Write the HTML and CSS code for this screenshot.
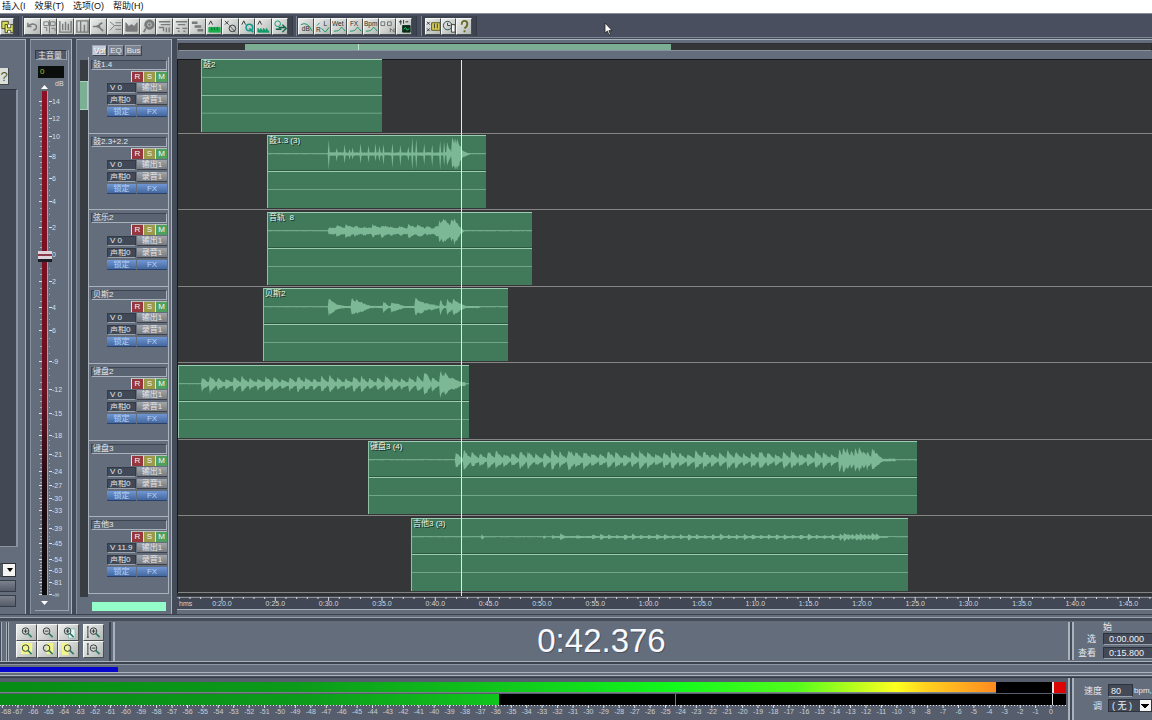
FILE: index.html
```html
<!DOCTYPE html>
<html lang="zh-CN">
<head>
<meta charset="utf-8">
<title>多轨编辑</title>
<link rel="stylesheet" href="styles.css">
</head>
<body>
<div class="app">
  <nav class="menu">
    <a href="#insert">插入(I</a><a href="#effects">效果(T)</a><a href="#options">选项(O)</a><a href="#help">帮助(H)</a>
  </nav>
  <header class="toolbar">
    <div class="tools" data-tools="file"></div>
    <div class="tools" data-tools="edit"></div>
    <div class="tools" data-tools="envelope"></div>
    <div class="tools" data-tools="window"></div>
    <svg class="pointer" width="10" height="14" viewBox="0 0 10 14"><path d="M1 1v10l2.400-2 1.600 4 1.500-.6-1.600-3.800H8z" fill="#fff" stroke="#222" stroke-width=".8"/></svg>
  </header>

  <main class="main">
    <section class="rack">
      <button class="rack-help" aria-label="帮助">?</button>
      <div class="rack-list"></div>
      <button class="rack-drop" aria-label="展开"><svg width="8" height="8" viewBox="0 0 8 8"><path d="M1 2h6L4 6z"/></svg></button>
      <button class="rack-bar" aria-label="效果"></button>
      <button class="rack-bar" aria-label="刷新"></button>
    </section>

    <section class="master">
      <div class="master-box">
        <h2 class="master-title">主音量</h2>
        <output class="lcd">0</output>
        <div class="fader">
          <svg class="scale" width="34" height="530" viewBox="0 0 34 530" id="scale"></svg>
          <input class="fader-input" type="range" min="0" max="1000" value="676" aria-label="主音量">
        </div>
      </div>
    </section>

    <section class="mixer">
      <div class="tabs"><button class="tab tab-on">Vol</button><button class="tab">EQ</button><button class="tab">Bus</button></div>
      <div class="mixer-body">
        <div class="scroller"><div class="scroller-thumb"></div></div>
        <div class="tracks" id="tracks"></div>
      </div>
      <div class="mixer-foot"><div class="load"></div></div>
    </section>

    <section class="view">
      <div class="overview"><div class="overview-bar"><div class="overview-range"></div></div></div>
      <div class="lanes" id="lanes"></div>
      <svg class="ruler" id="ruler" viewBox="0 0 975 17" preserveAspectRatio="xMinYMin slice"></svg>
    </section>
  </main>

  <section class="transport">
    <div class="zoom">
      <div class="zoom-grid" data-tools="zoom"></div>
      <div class="zoom-grid zoom-v" data-tools="zoomv"></div>
    </div>
    <output class="clock">0:42.376</output>
    <div class="times">
      <span class="times-head">始</span>
      <label for="sel">选</label><input class="field" id="sel" value="0:00.000">
      <label for="vis">查看</label><input class="field" id="vis" value="0:15.800">
    </div>
  </section>

  <div class="progress"><div class="progress-fill"></div></div>

  <footer class="bottom">
    <div class="meters">
      <div class="meter"><div class="meter-fill meter-top"></div><div class="clip-light"></div></div>
      <div class="meter"><div class="meter-fill meter-low"></div><div class="peak"></div><div class="zero"></div></div>
      <svg class="db" id="db" viewBox="0 0 1066 15" preserveAspectRatio="none"></svg>
    </div>
    <div class="tempo">
      <label for="bpm">速度</label><span class="tempo-row"><input class="field bpm" id="bpm" value="80">bpm,</span>
      <label for="key">调</label><select class="key" id="key"><option>( 无 )</option></select>
    </div>
  </footer>
</div>
<script src="app.js"></script>
</body>
</html>
```

FILE: styles.css
```css
:root {
  --panel: #646d7c;
  --gap: #434a58;
  --light: #a9b1bd;
  --dark: #333a45;
  --clip: #407a5b;
  --font: "Liberation Sans", "Noto Sans CJK SC", sans-serif;
}
* { box-sizing: border-box; }
body { margin: 0; background: var(--gap); font: 8px/10px var(--font); color: #e4e8ee; }
button, input, select { font: inherit; color: inherit; padding: 0; border: 0; margin: 0; border-radius: 0; }
svg { display: block; }
.app { display: flex; flex-direction: column; height: 100vh; min-height: 640px; overflow: hidden; }

.menu { display: flex; gap: 9px; height: 13px; padding-left: 2px; background: #fff; font-size: 9px; line-height: 13px; }
.menu a { color: #111; text-decoration: none; white-space: nowrap; }

.toolbar { position: relative; display: flex; gap: 6px; height: 25px; padding: 2px 0 1px; background: #494f5e; border-top: 1px solid #888d96; border-bottom: 1px solid #7c8593; }
.tools { display: flex; padding: 2px 4px 1px 1px; border-right: 1px solid #343a46; border-left: 1px solid #7d8594; background: #3d434f; }
.tools[data-tools="file"] { width: 19px; border-left: 0; padding-left: 0; margin-right: -3px; }
.tools[data-tools="edit"] { width: 271px; }
.tools[data-tools="envelope"] { width: 121px; margin-left: -3px; }
.tools[data-tools="window"] { width: 56px; padding-left: 3px; margin-left: -2px; }
.tool { flex: 1; min-width: 0; overflow: hidden; display: grid; place-items: center; color: #777b7b; background: linear-gradient(135deg, #eceeec, #b2b7b4); border: 1px solid; border-color: #f4f6f5 #4a4f52 #4a4f52 #f4f6f5; }
.tool svg { width: 15px; height: 15px; }
.tools[data-tools="file"] .tool svg { width: 13px; height: 14px; }
.pointer { position: absolute; left: 604px; top: 8px; }

.main { flex: 1; min-height: 0; display: flex; gap: 4px; padding-top: 1px; }
.rack, .master, .mixer { background: var(--panel); border-top: 1px solid var(--light); border-right: 1px solid var(--light); }
.master, .mixer { border-left: 1px solid #8790a0; }
.rack { width: 26px; display: flex; flex-direction: column; align-items: flex-start; gap: 3px; padding: 28px 2px 7px 0; }
.rack-help { width: 9px; height: 17px; font-size: 13px; line-height: 15px; color: #555a28; background: #dcdfd8; border: solid #41464a; border-width: 0 1px 1px 0; overflow: hidden; }
.rack-list { flex: 1; width: 18px; margin: 1px 0 13px; background: #434855; border-top: 1px solid #2f3540; border-right: 2px solid #8c94a2; border-bottom: 1px solid #8c94a2; }
.rack-drop { width: 16px; height: 14px; display: flex; justify-content: flex-end; align-items: center; background: #f4f4f2; border: 1px solid #2e3238; border-left: 3px solid #50565e; padding-right: 1px; color: #000; }
.rack-bar { width: 16px; height: 12px; background: linear-gradient(#7b828d, #555c69); border: 1px solid #353b47; border-left: 0; }

.master { width: 42px; padding: 10px 2px 3px 4px; }
.master-box { height: 100%; border-right: 1px solid #98a1ae; border-bottom: 1px solid #98a1ae; }
.master-title { margin: 0 1px 0 0; height: 10px; padding-left: 2px; font-weight: normal; font-size: 8px; line-height: 9px; background: #525a69; border: 1px solid #98a1ae; border-top-color: var(--dark); border-left-color: var(--dark); }
.lcd { display: block; width: 26px; height: 12px; margin: 6px 0 0 3px; padding-left: 2px; line-height: 12px; background: #0a0e0c; color: #a4c53a; }
.fader { display: grid; width: 34px; }
.fader > * { grid-area: 1 / 1; }
.scale text { fill: #d8dde5; font-size: 7px; }
.fader-input { -webkit-appearance: none; appearance: none; writing-mode: vertical-lr; direction: rtl; width: 14px; height: 504px; margin: 13px 0 0 3px; background: linear-gradient(#8e1024, #6a1020 60%, #230c13 78%, #0b0b0d) 4px 0 / 5px 100% no-repeat; }
.fader-input::-webkit-slider-thumb { -webkit-appearance: none; width: 14px; height: 11px; background: linear-gradient(#ded4da 0 3px, #8d3a4c 3px 5px, #ded4da 5px 8px, #1b1d25 8px); }

.mixer { width: 96px; display: flex; flex-direction: column; }
.tabs { display: flex; gap: 1px; height: 17px; padding: 5px 0 1px 15px; }
.tab { height: 11px; padding: 0 1px; line-height: 9px; background: #7d8490; border: 1px solid #9fa6b1; border-right-color: #3d4450; border-bottom-color: #3d4450; }
.tab-on { background: #c3ccdc; color: #fff; text-shadow: 1px 1px #6b7280; }
.mixer-body { flex: 1; min-height: 0; display: flex; }
.scroller { width: 8px; margin: 3px 0 -3px 3px; padding-top: 21px; background: #373d42; }
.scroller-thumb { height: 29px; background: #7bb094; border: 1px solid #a6d4ba; border-left: 0; }
.tracks { flex: 1; display: grid; grid-template-rows: repeat(7, 1fr); margin-right: 2px; border-left: 1px solid var(--light); border-right: 1px solid var(--light); }
.track { border-bottom: 1px solid var(--light); padding: 3px 1px 0 2px; min-height: 0; }
.name { height: 10px; margin: 0 0 1px; padding-left: 1px; font-size: 8px; line-height: 8px; font-weight: normal; border: 1px solid var(--light); border-top-color: #3e4552; border-left-color: #3e4552; background: #5a6372; }
.rsm { display: grid; grid-template-columns: repeat(3, 12px); justify-content: end; height: 11px; margin-bottom: 1px; }
.rsm button { line-height: 10px; border-left: 1px solid #dfe3e0; border-top: 1px solid #b9beb9; color: #f3f6f3; }
.rec { background: #96363d; }
.solo { background: #9a9a48; }
.mute { background: #4fa05e; }
.knobs { display: grid; grid-template-columns: 29px 30px; grid-auto-rows: 10px; gap: 2px 1px; justify-content: end; }
.knobs button { line-height: 9px; overflow: hidden; white-space: nowrap; }
.knobs .value { background: #414856; text-align: left; padding-left: 2px; border: 1px solid #343a46; border-bottom-color: #9aa2ae; line-height: 8px; }
.knobs .route { background: linear-gradient(#a2a5a9, #777a7e); border-bottom: 1px solid #3d424c; }
.knobs .blue { background: linear-gradient(#6f97d4, #44689f); border-bottom: 1px solid #2b4168; color: #b9d2f4; }
.mixer-foot { height: 20px; padding: 8px 5px 3px 15px; }
.load { height: 9px; background: #93fcc9; }

.view { flex: 1; min-width: 0; margin-left: 1px; display: flex; flex-direction: column; background: var(--panel); border-top: 1px solid var(--light); }
.overview { height: 19px; padding: 3px 0 8px 1px; }
.overview-bar { height: 8px; background: #333537; border: 1px solid #2b2f35; border-bottom-color: #8a929e; }
.overview-range { width: 43.8%; height: 100%; margin-left: 6.8%; background: linear-gradient(90deg, #7cae94 0 113px, #c2e6d1 113px 114px, #7cae94 114px); }
.lanes { position: relative; flex: 1; min-height: 0; display: grid; grid-template-rows: 29fr repeat(6, 30fr); background: #353638; border-left: 1px solid #15181b; border-top: 1px solid #15181b; }
.lane { min-height: 0; display: flex; flex-direction: column; justify-content: flex-end; border-bottom: 1px solid #858585; padding-bottom: 1px; }
.lane-clip { position: relative; height: 73px; background: var(--clip); border-top: 1px solid #9ccdb2; border-left: 1px solid #8fc1a6; }
.lane-clip svg { width: 100%; height: 100%; }
.lane-clip span { position: absolute; left: 1px; top: 0; color: #eef6f0; text-shadow: 1px 1px #14281d; white-space: pre; }
.playhead { position: absolute; top: 0; bottom: -3px; left: 29.1%; width: 1px; background: #d9efdf; }
.ruler { width: 100%; height: 17px; margin-bottom: 4px; background: #414754; border-bottom: 1px solid var(--light); }
.ruler text { fill: #d5d9df; font-size: 7px; }

.transport { display: flex; height: 50px; padding: 7px 0 2px; background: var(--panel); border-top: 1px solid #3c4350; box-shadow: inset 0 2px var(--panel), inset 0 3px #99a2ae, inset 0 6px #444b59, inset 0 -2px #3c4350, inset 0 -3px var(--light); }
.zoom { display: flex; gap: 4px; padding: 2px 5px 6px 16px; border-right: 2px solid #3c4350; margin-bottom: 1px; background: linear-gradient(90deg, #444b59 1px, var(--light) 1px 2px, var(--panel) 2px 6px, var(--light) 6px 7px, #444b59 7px 8px, var(--light) 8px 9px, var(--panel) 9px); }
.zoom-grid { display: grid; width: 63px; grid-template-columns: repeat(3, 1fr); grid-template-rows: repeat(2, 17px); }
.zoom-v { width: 21px; grid-template-columns: 1fr; }
.zoom-grid .tool svg { width: 17px; height: 15px; }
.clock { flex: 1; text-align: center; font-size: 33px; line-height: 38px; color: #f7f9fc; text-shadow: 1px 1px #4b5361; margin-bottom: 1px; border-left: 2px solid var(--light); padding-left: 20px; margin-left: 2px; }
.times { width: 84px; display: grid; grid-template-columns: 23px 1fr; grid-template-rows: 9px 12px 12px; gap: 2px 3px; padding-left: 7px; border-left: 2px solid var(--light); box-shadow: inset 2px 0 var(--gap), inset 4px 0 var(--light); margin-bottom: 2px; }
.times-head { grid-column: 1 / -1; padding-left: 26px; font-size: 9px; line-height: 10px; }
.times label, .tempo label { font-size: 9px; line-height: 12px; text-align: right; padding-right: 4px; white-space: nowrap; }
.field { min-width: 0; width: 100%; height: 12px; padding-left: 5px; font-size: 9px; background: #434957; border: 1px solid #2d333e; border-bottom-color: #99a1ad; border-right-width: 0; color: #eef1f5; }

.progress { height: 14px; padding: 2px 0 0; background: var(--panel); border-top: 1px solid #8e96a2; border-bottom: 1px solid var(--dark); box-shadow: inset 0 -1px #4a5160, inset 0 -2px var(--light), inset 0 -4px var(--panel), inset 0 -5px var(--light); }
.progress-fill { width: 10.2%; height: 5px; background: #0505cc; }

.bottom { display: flex; height: 42px; background: #565e6d; }
.meters { flex: 1; min-width: 0; padding-top: 4px; margin-right: 2px; }
.meter { position: relative; height: 11px; margin-bottom: 1px; background: #000; }
.meter + .meter { margin-bottom: 0; }
.meter-top { border-bottom: 1px solid #7b8188; }
.meter-fill { height: 100%; background: linear-gradient(90deg, #078c16, #0c9a1a 30%, #10c01c 48%, #12fa1c 68%, #54fb1c 80%, #ffff20 90%, #ffd020 93%, #ff8a20) 0 0 / 996px 100% no-repeat; }
.meter-top { width: 93.4%; }
.meter-low { width: 46.8%; }
.clip-light { position: absolute; right: 0; top: 0; width: 14px; height: 11px; background: #dc0505; border-left: 2px solid #e8e8e8; }
.peak { position: absolute; left: 63.3%; top: 0; width: 1px; height: 100%; background: #777; }
.zero { position: absolute; right: 13px; top: 0; width: 1px; height: 100%; background: #ddd; }
.db { width: 100%; height: 15px; }
.db text { fill: #c9ced6; font-size: 7px; }
.tempo { width: 84px; display: grid; grid-template-columns: 29px 1fr; grid-template-rows: 13px 13px; gap: 2px 2px; padding: 6px 0 0 7px; border-left: 2px solid var(--light); box-shadow: inset 2px 0 var(--gap), inset 4px 0 var(--light); background: var(--panel); align-items: center; }
.tempo-row { display: flex; align-items: center; gap: 1px; overflow: hidden; }
.field.bpm { flex: none; width: 25px; height: 13px; padding-left: 2px; border-right-width: 1px; }
.key { -webkit-appearance: none; appearance: none; width: 100%; height: 13px; padding-left: 3px; font-size: 9px; color: #eef1f5; border: 1px solid #2d333e; background: conic-gradient(from 315deg at 50% 100%, #000 90deg, transparent 0) right 2px center / 8px 4px no-repeat, linear-gradient(90deg, #434957 31px, #f5f5f3 31px); }
```

FILE: app.js
```js
const $ = (s) => document.querySelector(s);
const green = 'stroke="#12965f"';
const lens = (extra, bg = '') => `${bg}<circle cx="7" cy="6.500" r="3.500" fill="none" stroke="#2f3836"/><path d="M9.500 9l4 4" stroke="#2d7a66" stroke-width="1.700"/>${extra}`;
const plus = '<path d="M5 6.500h4M7 4.500v4"/>';
const minus = '<path d="M5 6.500h4"/>';
const page = '<path d="M2 1h12v12H2z" fill="#f1f58a" stroke="none"/>';
const curve = `<path d="M2 13q6 0 7-3t5 3" ${green}/>`;
const word = (t, x = 0) => `<text x="${x}" y="7" font-size="7" fill="#26302d" stroke="none">${t}</text>`;

// Icon name and drawing, on a 16 x 16 grid
const tools = {
  file: [['保存', '<path d="M1 1h8v9H1z" fill="#d7dc54" stroke="#30331c"/><path d="M5 5h10v10H5z" fill="#e4e86a" stroke="#30331c"/><path d="M8 5v4h4V5M8 15v-3h4v3" stroke="#30331c" fill="#fff"/>']],
  edit: [
    ['撤消', '<path d="M3 4v4h4M3 8q5-5 9-1 1 4-3 5" stroke-width="1.500"/>'],
    ['合并', '<path d="M2 3h5v4H2zM9 3h5v4H9zM2 9h3v4M8 1v14M10 10h4v3"/>'],
    ['分割', '<path d="M2 2v12h12V2M5 5v7M8 3v9M11 5v7" stroke-width="1.500"/>'],
    ['修剪', '<path d="M2 2h12v12H2zM6 2v12M10 6v8" stroke-width="1.500"/>'],
    ['切割', '<path d="M2 8h4l6-4M6 8l3 1 4 4M9 5v4" stroke-width="1.800"/>'],
    ['组合', '<path d="M2 3l5 4-5 5M7 7h7M8 4h6M8 11h6"/>'],
    ['交叉', '<path d="M2 4v9h12V4l-3 4-3-2-3 2z" fill="currentColor"/>'],
    ['颜色', '<circle cx="9" cy="6" r="5" fill="currentColor"/><path d="M3 14l2-4" stroke-width="2"/><circle cx="9" cy="6" r="2" stroke="#c8ccc9"/>'],
    ['对齐', '<path d="M2 3h12M4 6h10M2 9h5v4M10 9v5M13 9v5" stroke-width="1.500"/>'],
    ['循环', '<path d="M2 3h12M4 6h8M2 10h4M9 10h5M4 13h2M10 13h2" stroke-width="1.500"/>'],
    ['排列', '<path d="M2 4h6M5 8h7M8 12h6" stroke-width="2.500"/>'],
    ['音块', '<path d="M2 6l2-4 2 4" stroke="#333"/><path d="M2 9h12v5H2z" fill="#18b04c" stroke="#18b04c"/><path d="M5 9v3M8 9v3M11 9v3" stroke="#0c6c2c"/>'],
    ['剪切', '<path d="M2 2l4 4M6 2L2 6" stroke="#333"/><circle cx="10" cy="10" r="3.500" stroke="#333"/><path d="M7 7l6 7" stroke="#555"/>'],
    ['量化', '<path d="M2 6l2-4 2 4" stroke="#333"/><circle cx="10" cy="9" r="3.500" stroke="#129a8a" stroke-width="1.600"/><path d="M10 10l4 4" stroke="#129a8a" stroke-width="1.600"/>'],
    ['节拍', '<path d="M2 6l2-4 2 4" stroke="#333"/><path d="M2 14v-4l3 3v-3l3 3v-3l3 3v-3l3 4z" fill="#129a6a" stroke="#129a6a"/>'],
    ['跟随', '<circle cx="5" cy="5" r="3" stroke="#129a6a"/><path d="M6 9h7M10 6l4 4-4 4M3 11h6" stroke="#0a6648" stroke-width="1.500"/>']
  ],
  envelope: [
    ['音量', `<path d="M2 6q7-4 12 7" ${green}/>` + '<text x="3" y="13" font-size="7" fill="#26302d" stroke="none">dB</text>'],
    ['声相', word('L', 9) + '<text x="1" y="14" font-size="7" fill="#26302d" stroke="none">R</text>' + `<path d="M2 7l3-3M7 10l4 4 4-5" ${green}/>`],
    ['湿声', word('Wet') + curve],
    ['效果', word('FX', 2) + curve],
    ['速度', word('Bpm') + curve],
    ['包络', '<path d="M1 3h4v4H1zM8 3h4v4H8zM11 10v4M11 10l4 4v-4" stroke="#6b706e"/>'],
    ['混音', '<path d="M2 3h3M4 1v5M7 1v4M9 3h3" stroke="#26302d"/><path d="M6 7h8v7H6z" fill="#0a2c1c" stroke="#0a2c1c"/><path d="M7 11l2-2 2 3 2-2" stroke="#28d070"/>']
  ],
  window: [
    ['窗口', '<path d="M1 3l3 3M4 3L1 6M1 10l3 3M4 10l-3 3" stroke="#333"/><path d="M6 4h9v8H6z" fill="#d8cf50" stroke="#55531c"/><path d="M9 5v5M12 5v5" stroke="#333"/>'],
    ['时钟', '<circle cx="6" cy="7" r="4.500" stroke="#26504a"/><path d="M6 4v3h3M10 6h4v8h-4z" stroke="#333" fill="#f6f6f6"/>'],
    ['帮助', '<path d="M5 6q0-4 3-4t3 3-3 5M8 12v2" stroke="#686b28" stroke-width="2"/>']
  ],
  zoom: [
    ['放大', lens(plus)],
    ['缩小', lens(minus)],
    ['全部', lens(plus, '<path d="M8 4h7v10H8z" fill="#eaf6f0" stroke="#8bb"/>')],
    ['缩放选区', lens('', page)],
    ['选区左侧', lens('', '<path d="M7 1h7v12H7z" fill="#f1f58a" stroke="none"/>')],
    ['选区右侧', lens('', '<path d="M1 1h7v13H1z" fill="#f1f58a" stroke="none"/>')]
  ],
  zoomv: [['垂直放大', '<path d="M2 2v11M1 2h2M1 13h2"/><g transform="translate(1)">' + lens(plus) + '</g>'], ['垂直缩小', '<path d="M2 2v11M1 2h2M1 13h2"/><g transform="translate(1)">' + lens(minus) + '</g>']]
};
for (const box of document.querySelectorAll('[data-tools]')) {
  const dark = box.dataset.tools.startsWith('zoom') ? '#2f3836' : 'currentColor';
  box.innerHTML = tools[box.dataset.tools].map(([label, art]) =>
    `<button class="tool" aria-label="${label}"><svg viewBox="0 0 16 16" fill="none" stroke="${dark}">${art}</svg></button>`).join('');
}

// Master fader scale
const marks = [[14, 101], [12, 118], [10, 136], [8, 156], [6, 178], [4, 201], [2, 227], [0, 254], [2, 281], [4, 307], [6, 330], ['-9', 361], ['-12', 389], ['-15', 413], ['-18', 435], ['-21', 454], ['-24', 471], ['-27', 485], ['-30', 498], ['-33', 510], ['-39', 528], ['-45', 543], ['-54', 559], ['-63', 570], ['-81', 582], ['-∞', 594]];
let art = '<text x="20" y="8">dB</text><path d="M6 11l3.500-4 3.500 4zM6 523h7l-3.500 4z" fill="#fff"/><path d="M12.500 13v504" stroke="#d28d96"/>';
marks.forEach(([t, y], i) => {
  const v = y - 78;
  art += `<path d="M4 ${v + .5}h3M14 ${v + .5}h3" stroke="#e0e4ea"/><text x="17" y="${v + 3}">${t}</text>`;
  const next = marks[i + 1];
  if (next) for (let k = 1; k < 4; k++) {
    const m = Math.round(v + (next[1] - y) * k / 4) + .5;
    art += `<path d="M5 ${m}h2M14 ${m}h1" stroke="#a3abb7"/>`;
  }
});
$('#scale').innerHTML = art;

// Bursts are [start, amplitude, length, end of a steady level], in view pixels
const every = (from, to, step, amp, len) => {
  const out = [];
  for (let x = from, i = 0; x < to; x += step, i++) out.push([x, amp + Math.sin(i * 1.700) * amp * .22, len]);
  return out;
};
const hits = [[328, 16], [336, 8], [344, 12], [349, 6], [352, 7], [360, 14], [368, 9], [375, 11], [379, 10], [383, 13], [392, 15], [400, 13], [408, 8], [412, 18], [416, 16], [424, 16], [432, 14], [440, 18], [444, 14]].map(([x, a]) => [x, a, 1]);
const tracks = [
  { name: '鼓1.4', clip: '鼓2', x: 201, w: 181, bursts: [] },
  { name: '鼓2.3+2.2', clip: '鼓1.3 (3)', x: 267, w: 219, bursts: [...hits, [328, 1.800, 0, 455], [447, 13, 5], [452, 20, 5], [455, 20, 3], [457, 18, 7], [459, 5, 12]] },
  { name: '弦乐2', clip: '音轨  8', x: 267, w: 265, bursts: [[328, 3.500, 0, 440], ...every(336, 440, 9, 6.500, 16), ...every(439, 457, 3, 12, 9), [457, 8, 7]] },
  { name: '贝斯2', clip: '贝斯2', x: 263, w: 245, bursts: [[328, 9, 12], [329, 4, 22], [351, 10, 12], [356, 8, 16], [383, 7, 6], [391, 6, 16], [415, 10, 12], [420, 7, 16], [431, 4, 10], [440, 9, 4], [447, 9, 8], [453, 9, 14], [328, 1.200, 0, 480]] },
  { name: '键盘2', clip: '', x: 178, w: 291, bursts: [...every(201, 425, 8, 8, 8), [424, 16, 8], [432, 9, 8], [440, 15, 9], [445, 12, 12], [452, 7, 14], [201, 2.200, 0, 466]] },
  { name: '键盘3', clip: '键盘3 (4)', x: 368, w: 549, bursts: [...every(455, 840, 8, 9, 9), [568, 13, 9], ...every(839, 870, 4, 13, 6), [872, 13, 12], [455, 1.600, 0, 896]] },
  { name: '吉他3', clip: '吉他3 (3)', x: 411, w: 497, vol: '11.9', bursts: [[481, 3, 3], [543, 2, 3], [552, 2, 4], [560, 4, 6], [576, 2, 12], ...every(592, 840, 8, 3, 5), ...every(840, 880, 4, 4, 5), [552, 1, 0, 888]] }
];
const noise = (n) => { const s = Math.sin(n * 12.9898) * 43758.5453; return s - Math.floor(s); };
function wave({ x, w, bursts }) {
  if (!bursts.length) return '';
  const top = [], low = [];
  for (let i = 0; i <= w; i++) {
    const at = x + i;
    let a = .2;
    for (const [s, amp, len, end] of bursts)
      if (at >= s && at < (end || s + len)) a = Math.max(a, end ? amp : amp * (1 - (at - s) / len));
    top.push(`${i} ${(18 - Math.min(16.5, a * (.65 + .35 * noise(at)))).toFixed(1)}`);
    low.unshift(`${i} ${(18 + Math.min(16, a * (.65 + .35 * noise(at + 7)))).toFixed(1)}`);
  }
  return `<path d="M${top.join('L')}L${low.join('L')}z" fill="#7cb796"/>`;
}
const span = 974, start = 178;
$('#lanes').innerHTML = tracks.map((t) => `<div class="lane"><div class="lane-clip" style="margin-left:${((t.x - start) / span * 100).toFixed(2)}%;width:${(t.w / span * 100).toFixed(2)}%">
<svg viewBox="0 0 ${t.w} 72" preserveAspectRatio="none"><path d="M0 17.500h${t.w}M0 53.500h${t.w}" stroke="#70a688"/><path d="M0 34.500h${t.w}" stroke="#2b5a41"/><path d="M0 35.500h${t.w}" stroke="#9ccdb2"/>${wave(t)}</svg><span>${t.clip}</span></div></div>`).join('') + '<div class="playhead"></div>';
$('#tracks').innerHTML = tracks.map((t) => `<article class="track"><h3 class="name">${t.name}</h3>
<div class="rsm"><button class="rec">R</button><button class="solo">S</button><button class="mute">M</button></div>
<div class="knobs"><button class="value">V ${t.vol || 0}</button><button class="route">输出1</button><button class="value">声相0</button><button class="route">录音1</button><button class="blue">锁定</button><button class="blue">FX</button></div></article>`).join('');

// Time ruler
let r = '<path d="M0 0h975v3H0z" fill="#303336"/><path d="M0 4.500h975" stroke="#8e8f95"/><text x="2" y="13">hms</text>';
for (let s = 16; s < 108; s++) {
  const x = 45 + (s - 20) * 10.665;
  const major = s % 5 === 0;
  r += `<path d="M${x.toFixed(1)} 4v${major ? 4 : 2}" stroke="#d5d9df"/>`;
  if (major && s >= 20) r += `<text x="${x.toFixed(1)}" y="13" text-anchor="middle">${Math.floor(s / 60)}:${String(s % 60).padStart(2, '0')}.0</text>`;
}
$('#ruler').innerHTML = r;

// Level scale; the lowest label is kept inside the left edge
let d = '<path d="M0 .5h1066" stroke="#dde1e6" stroke-dasharray="1 2"/>';
for (let n = 0; n < 69; n++) {
  const x = 1051 - n * 15.42;
  d += `<path d="M${x.toFixed(1)} 0v3" stroke="#dde1e6"/><text x="${Math.max(x, 6).toFixed(1)}" y="9" text-anchor="middle">${n ? '-' + n : 0}</text>`;
}
$('#db').innerHTML = d;
```
